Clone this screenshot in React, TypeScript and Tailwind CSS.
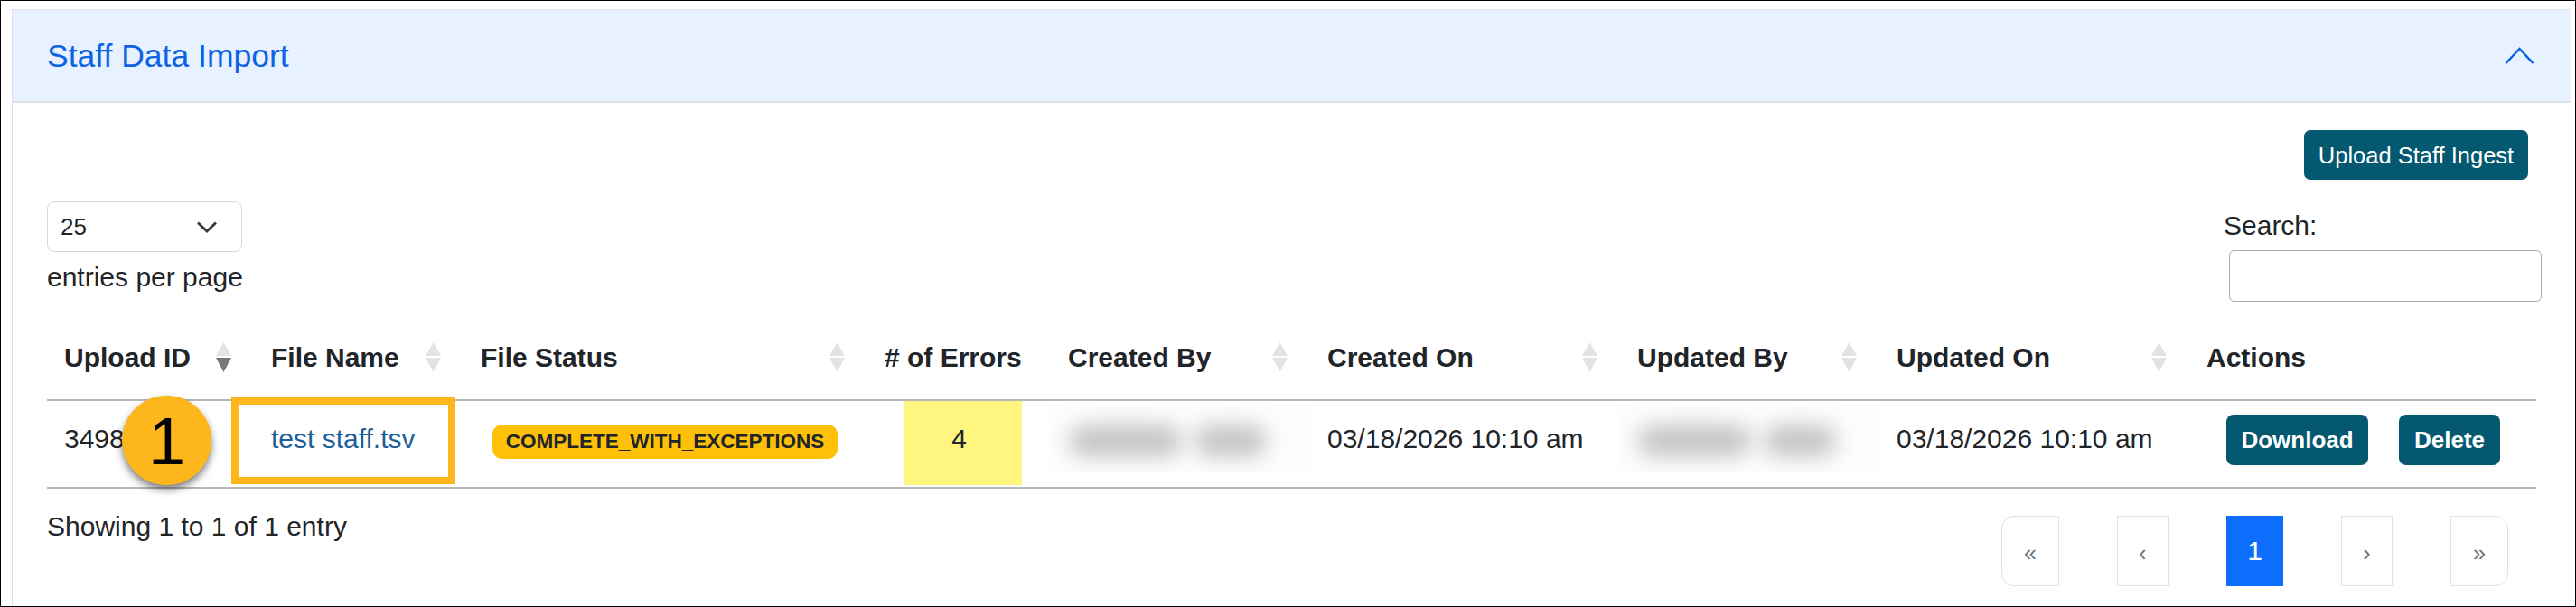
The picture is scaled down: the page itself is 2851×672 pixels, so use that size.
const columns = [
  { label: 'Upload ID', width: 'w-[229px]', sort: 'desc' },
  { label: 'File Name', width: 'w-[232px]', sort: 'none' },
  { label: 'File Status', width: 'w-[447px]', sort: 'none' },
  { label: '# of Errors', width: 'w-[203px]' },
  { label: 'Created By', width: 'w-[287px]', sort: 'none' },
  { label: 'Created On', width: 'w-[343px]', sort: 'none' },
  { label: 'Updated By', width: 'w-[287px]', sort: 'none' },
  { label: 'Updated On', width: 'w-[343px]', sort: 'none' },
  { label: 'Actions', width: 'w-[384px]' },
];

function SortIcon({ active }: { active: boolean }) {
  return (
    <svg width="17" height="33" viewBox="0 0 17 33" className="absolute right-[25px] top-[30px]">
      <polygon points="8.5,0 17,15 0,15" fill="#e2e4e4" />
      <polygon points="0,17 17,17 8.5,33" fill={active ? '#77787a' : '#e2e4e4'} />
    </svg>
  );
}

function Redacted({ first, second }: { first: string; second: string }) {
  return (
    <div className="-ml-[2px] -mr-[2px] h-[72px] overflow-hidden bg-[#fdfdfd] mt-[7px]">
      <div className="flex gap-[14px] pl-[22px] pt-[20px]">
        <div className={`${first} h-[34px] rounded-full bg-[#c0c2c4] blur-[12px]`} />
        <div className={`${second} h-[34px] rounded-full bg-[#c0c2c4] blur-[12px]`} />
      </div>
    </div>
  );
}

function PageItem({ label, className }: { label: string; className: string }) {
  return (
    <a className={`flex h-[78px] items-center justify-center border border-[#dee2e6] pt-[4px] text-[25px] text-[#6c757d] ${className}`}>
      {label}
    </a>
  );
}

export default function App() {
  return (
    <div className="relative h-[672px] w-[2851px] overflow-hidden border border-black bg-white pl-[12px] pr-[4px] pt-[9px] font-['Liberation_Sans',Arial,sans-serif] text-[30px] leading-[34px] text-[#212529]">
      <div className="flex h-full flex-col border-x border-[#dee2e6]">
        {/* Accordion header */}
        <div className="flex h-[104px] shrink-0 items-center justify-between border-y border-b-2 border-[#dee2e6] bg-[#e7f1ff] pl-[38px] pr-[40px]">
          <h2 className="text-[35.5px] font-normal text-[#0c63e4]">Staff Data Import</h2>
          <svg width="33" height="19" viewBox="0 0 33 19" fill="none" stroke="#0c63e4" strokeWidth="2.5">
            <polyline points="1.5,18 16.5,2 31.5,18" />
          </svg>
        </div>

        <div className="px-[38px]">
          <div className="flex justify-end pr-[9px] pt-[30px]">
            <button className="h-[55px] w-[248px] rounded-[7px] bg-[#045870] text-[25.5px] text-white">
              Upload Staff Ingest
            </button>
          </div>

          {/* Page length and search */}
          <div className="mt-[24px] flex h-[111px] justify-between">
            <div>
              <div className="flex h-[56px] w-[216px] items-center justify-between rounded-[8px] border border-[#d6d8da] pl-[14px] pr-[26px] text-[26px]">
                <span>25</span>
                <svg width="24" height="13" viewBox="0 0 24 13" fill="none" stroke="#343a40" strokeWidth="2.8">
                  <polyline points="2,1.5 12,11 22,1.5" />
                </svg>
              </div>
              <div className="mt-[11px]">entries per page</div>
            </div>
            <div className="-mr-[6px] w-[352px] pt-[10px]">
              <label>Search:</label>
              <input className="ml-[6px] mt-[10px] block h-[57px] w-[346px] rounded-[6px] border border-[#aaaaaa]" />
            </div>
          </div>

          <table className="mt-[15px] w-[2755px] table-fixed border-separate border-spacing-0">
            <colgroup>
              {columns.map((c) => (
                <col key={c.label} className={c.width} />
              ))}
            </colgroup>
            <thead>
              <tr>
                {columns.map((c) => (
                  <th key={c.label} className="relative h-[95px] border-b-2 border-[#b8b8b8] px-[19px] text-left font-bold">
                    {c.label}
                    {c.sort && <SortIcon active={c.sort === 'desc'} />}
                  </th>
                ))}
              </tr>
            </thead>
            <tbody>
              <tr className="h-[97px]">
                <td className="border-b-2 border-[#b8b8b8] px-[19px] pt-[25px] align-top">3498</td>
                <td className="border-b-2 border-[#b8b8b8] px-[19px] pt-[25px] align-top text-[#1f5f99]">test staff.tsv</td>
                <td className="border-b-2 border-[#b8b8b8] pl-[32px] pt-[26px] align-top">
                  <span className="flex h-[38px] w-[382px] items-center justify-center rounded-[11px] bg-[#ffc107] text-[22.5px] font-bold text-[#212529]">
                    COMPLETE_WITH_EXCEPTIONS
                  </span>
                </td>
                <td className="border-b-2 border-[#b8b8b8] align-top">
                  <div className="ml-[40px] h-[93px] w-[131px] bg-[#fff67f] pr-[8px] pt-[25px] text-center">4</div>
                </td>
                <td className="border-b-2 border-[#b8b8b8] align-top">
                  <Redacted first="w-[125px]" second="w-[80px]" />
                </td>
                <td className="border-b-2 border-[#b8b8b8] px-[19px] pt-[25px] align-top">03/18/2026 10:10 am</td>
                <td className="border-b-2 border-[#b8b8b8] align-top">
                  <Redacted first="w-[125px]" second="w-[80px]" />
                </td>
                <td className="border-b-2 border-[#b8b8b8] px-[19px] pt-[25px] align-top">03/18/2026 10:10 am</td>
                <td className="border-b-2 border-[#b8b8b8] pl-[41px] pt-[15px] align-top">
                  <div className="flex gap-[34px] font-bold text-white">
                    <button className="h-[56px] w-[157px] rounded-[8px] bg-[#045870] text-[26px] font-bold">Download</button>
                    <button className="h-[56px] w-[112px] rounded-[8px] bg-[#045870] text-[26px] font-bold">Delete</button>
                  </div>
                </td>
              </tr>
            </tbody>
          </table>

          {/* Footer */}
          <div className="flex items-start justify-between">
            <div className="mt-[25px]">Showing 1 to 1 of 1 entry</div>
            <div className="mr-[31px] mt-[30px] flex gap-[64px]">
              <PageItem label="«" className="w-[64px] rounded-l-[14px]" />
              <PageItem label="‹" className="w-[57px]" />
              <a className="flex h-[78px] w-[63px] items-center justify-center bg-[#0d6efd] text-white">1</a>
              <PageItem label="›" className="w-[57px]" />
              <PageItem label="»" className="w-[64px] rounded-r-[14px]" />
            </div>
          </div>
        </div>
      </div>

      {/* Callout overlays */}
      <div className="absolute left-[255px] top-[439px] h-[96px] w-[248px] border-[8px] border-[#fdb71c]" />
      <div className="absolute left-[134px] top-[437px] flex h-[99px] w-[99px] items-center justify-center rounded-full bg-[#fdb71c] pt-[3px] text-[74px] leading-none text-black shadow-[0_5px_8px_rgba(0,0,0,0.5)]">
        1
      </div>
    </div>
  );
}
